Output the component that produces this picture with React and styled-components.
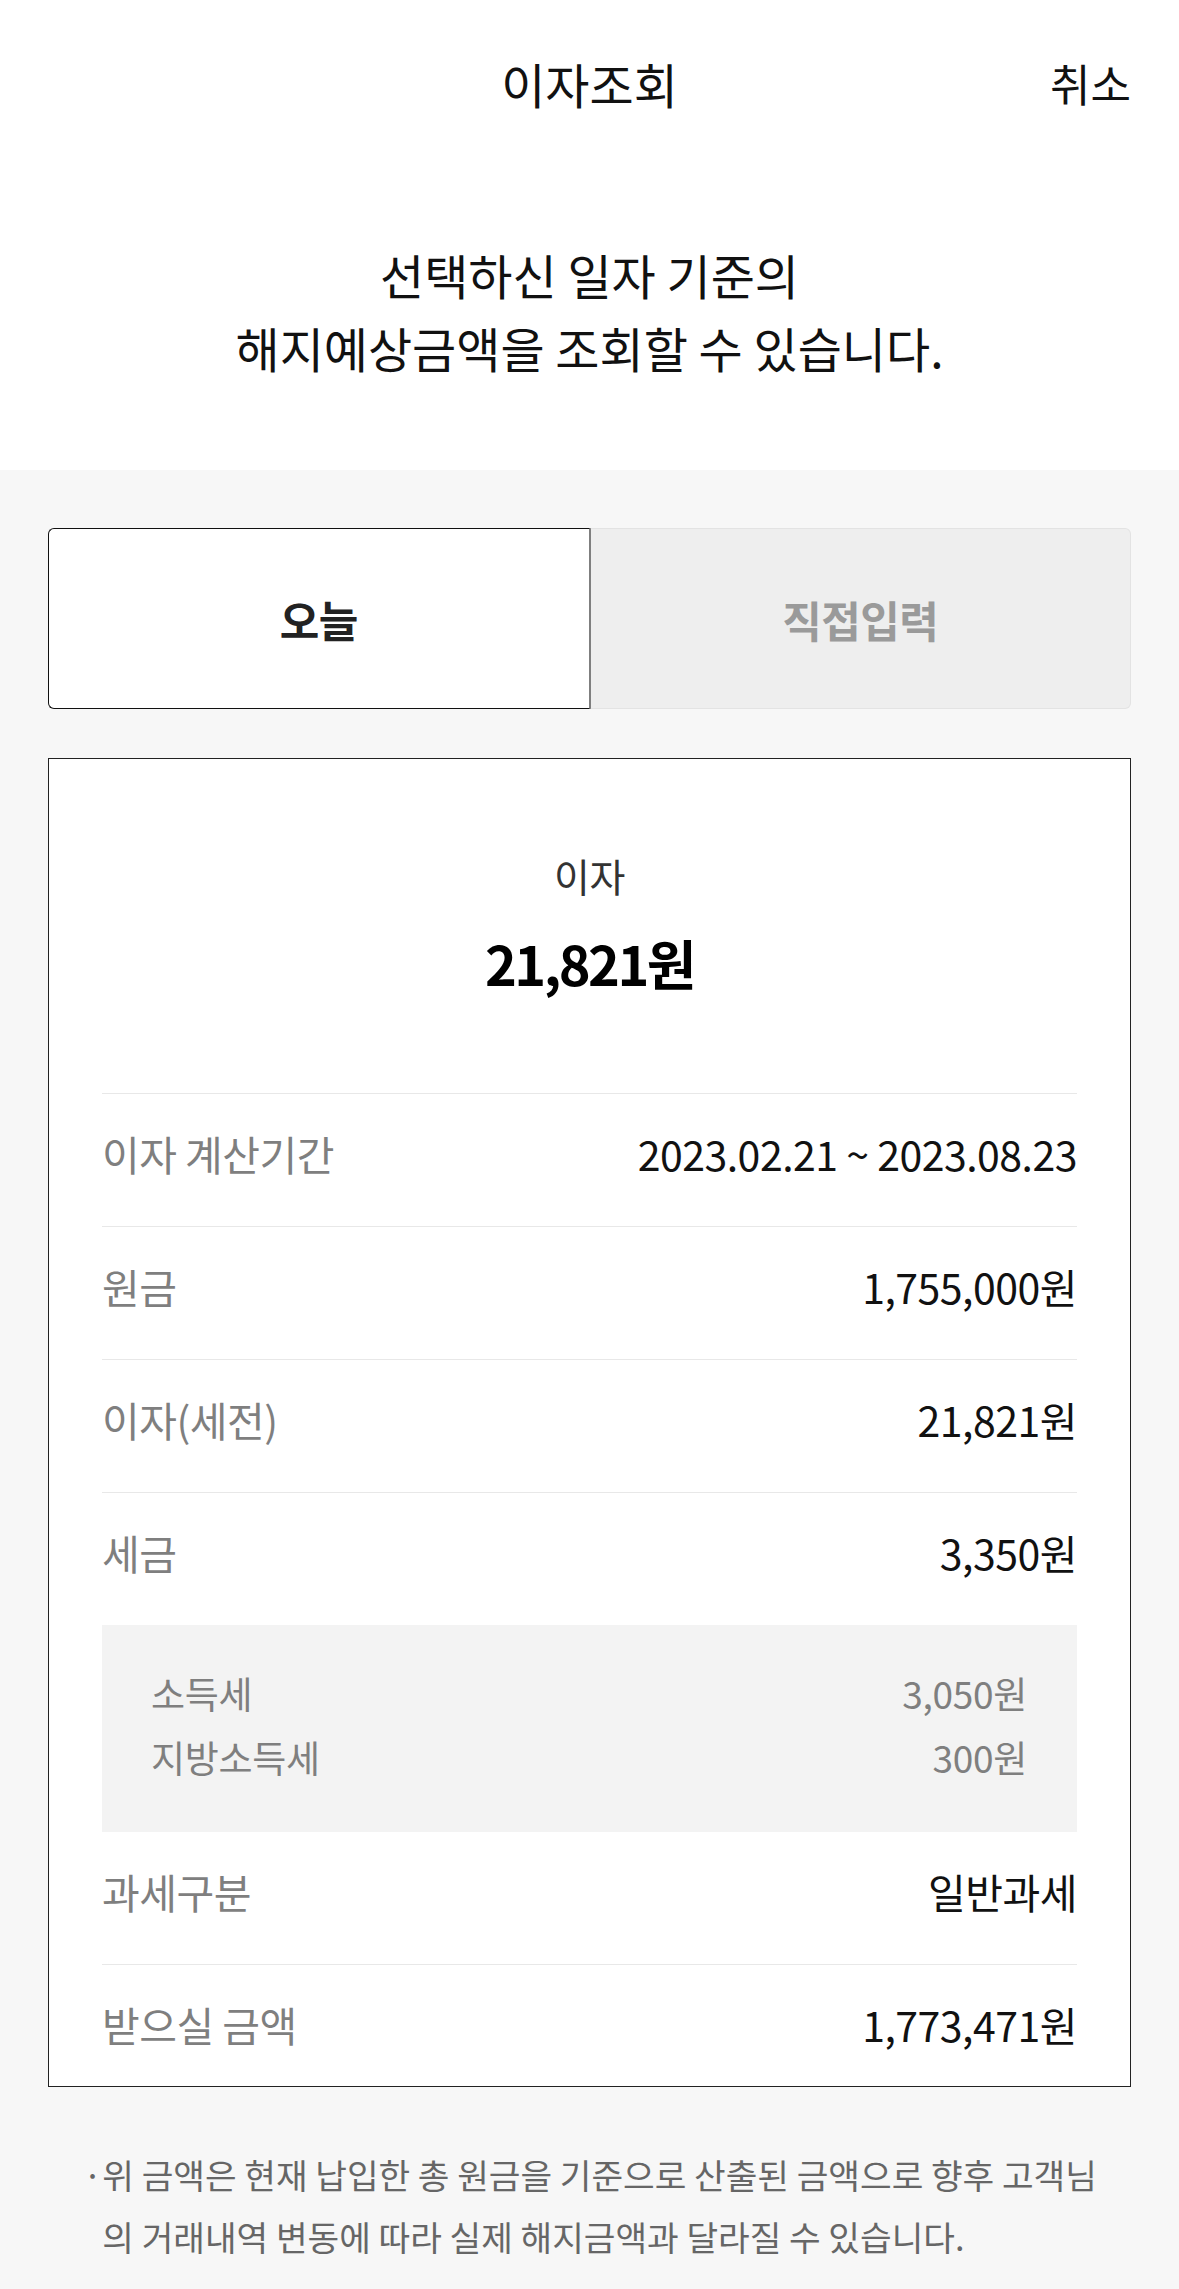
import React from 'react'
import styled, { createGlobalStyle } from 'styled-components'

const GlobalStyle = createGlobalStyle`
  html, body {
    margin: 0;
    padding: 0;
    background: #f7f7f7;
  }
  body {
    font-family: "Noto Sans CJK KR", "Noto Sans", sans-serif;
    color: #111;
  }
  * { box-sizing: border-box; }
`

const Page = styled.div`
  min-height: 2289px;
  background: #f7f7f7;
`

const Header = styled.header`
  background: #fff;
`

const NavBar = styled.div`
  display: grid;
  grid-template-columns: 1fr auto 1fr;
  align-items: center;
  height: 166px;
  padding: 0 48px;
`

const NavTitle = styled.h1`
  grid-column: 2;
  margin: 0;
  font-size: 48px;
  font-weight: 400;
  line-height: 60px;
  color: #111;
`

const CancelButton = styled.button`
  justify-self: end;
  border: 0;
  background: none;
  padding: 0;
  font-family: inherit;
  font-size: 44px;
  line-height: 60px;
  color: #111;
`

const Intro = styled.p`
  margin: 0;
  padding: 72px 0 86px;
  text-align: center;
  font-size: 48px;
  line-height: 73px;
  color: #111;
`

const Content = styled.main`
  padding: 58px 48px 0;
`

const Tabs = styled.div`
  display: flex;
  height: 181px;
  margin-bottom: 49px;
`

const Tab = styled.button`
  flex: 1;
  display: flex;
  align-items: center;
  justify-content: center;
  font-family: inherit;
  font-size: 43px;
  font-weight: 700;
  letter-spacing: -0.5px;
  padding: 0;
  color: ${p => (p.$active ? '#222' : '#9a9a9a')};
  background: ${p => (p.$active ? '#fff' : '#eee')};
  border: 1px solid ${p => (p.$active ? '#111' : '#e3e3e3')};
  border-right: ${p => (p.$active ? '2px solid #7f7f7f' : '1px solid #e3e3e3')};
  border-left: ${p => (p.$active ? '1px solid #111' : 'none')};
  border-radius: ${p => (p.$active ? '6px 0 0 6px' : '0 6px 6px 0')};
`

const Card = styled.section`
  background: #fff;
  border: 1px solid #222;
`

const Summary = styled.div`
  padding: 94px 0 98px;
  text-align: center;
`

const SummaryLabel = styled.div`
  font-size: 39px;
  line-height: 44px;
  letter-spacing: -0.5px;
  color: #333;
`

const SummaryAmount = styled.div`
  margin-top: 34px;
  font-size: 54px;
  line-height: 64px;
  font-weight: 700;
  letter-spacing: -2.5px;
  color: #000;
`

const Details = styled.div`
  padding: 0 53px;
`

const Row = styled.div`
  display: flex;
  justify-content: space-between;
  align-items: center;
  padding: 38px 0 52px;
  line-height: 42px;
  font-size: 41px;
  border-top: ${p => (p.$line ? '1px solid #e8e8e8' : 'none')};

  &:last-child {
    padding-bottom: 41px;
  }
`

const Label = styled.span`
  color: #7f7f7f;
  letter-spacing: -0.5px;
`

const Value = styled.span`
  color: #111;
  letter-spacing: -0.5px;
`

const TaxBox = styled.div`
  background: #f3f3f3;
  padding: 36px 50px 43px 49px;
`

const TaxRow = styled.div`
  display: flex;
  justify-content: space-between;
  font-size: 37px;
  line-height: 64px;
  letter-spacing: -0.3px;
  color: #7f7f7f;
`

const Note = styled.div`
  display: flex;
  margin: 56px 20px 0 35px;
  font-size: 34.4px;
  line-height: 62px;
  color: #666;
`

const Bullet = styled.span`
  flex: 0 0 19px;
`

const NoteText = styled.p`
  flex: 1;
  margin: 0;
  word-break: break-all;
`

const rows = [
  { label: '이자 계산기간', value: '2023.02.21 ~ 2023.08.23' },
  { label: '원금', value: '1,755,000원' },
  { label: '이자(세전)', value: '21,821원' },
  { label: '세금', value: '3,350원' },
]

const taxes = [
  { label: '소득세', value: '3,050원' },
  { label: '지방소득세', value: '300원' },
]

const App = () => {
  return (
    <Page>
      <GlobalStyle />
      <Header>
        <NavBar>
          <NavTitle>이자조회</NavTitle>
          <CancelButton>취소</CancelButton>
        </NavBar>
        <Intro>
          선택하신 일자 기준의<br />
          해지예상금액을 조회할 수 있습니다.
        </Intro>
      </Header>

      <Content>
        <Tabs>
          <Tab $active>오늘</Tab>
          <Tab>직접입력</Tab>
        </Tabs>

        <Card>
          <Summary>
            <SummaryLabel>이자</SummaryLabel>
            <SummaryAmount>21,821원</SummaryAmount>
          </Summary>

          <Details>
            {rows.map((current) => (
              <Row $line key={current.label}>
                <Label>{current.label}</Label>
                <Value>{current.value}</Value>
              </Row>
            ))}

            <TaxBox>
              {taxes.map((current) => (
                <TaxRow key={current.label}>
                  <span>{current.label}</span>
                  <span>{current.value}</span>
                </TaxRow>
              ))}
            </TaxBox>

            <Row>
              <Label>과세구분</Label>
              <Value>일반과세</Value>
            </Row>
            <Row $line>
              <Label>받으실 금액</Label>
              <Value>1,773,471원</Value>
            </Row>
          </Details>
        </Card>

        <Note>
          <Bullet>·</Bullet>
          <NoteText>
            위 금액은 현재 납입한 총 원금을 기준으로 산출된 금액으로 향후 고객님의 거래내역 변동에 따라 실제 해지금액과 달라질 수 있습니다.
          </NoteText>
        </Note>
      </Content>
    </Page>
  )
}

export default App
